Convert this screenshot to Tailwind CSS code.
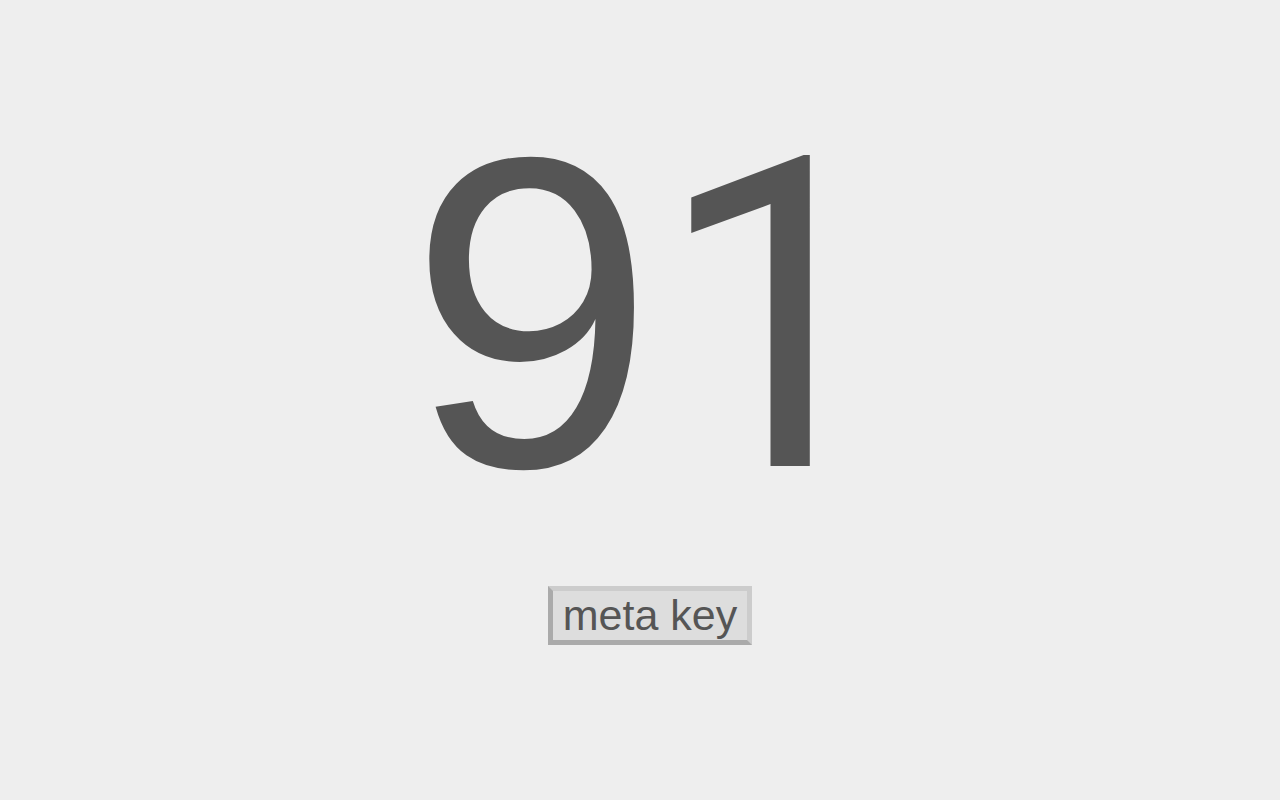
<!DOCTYPE html>
<html lang="en">
<head>
<meta charset="utf-8">
<meta name="viewport" content="width=device-width, initial-scale=1">
<title>Key code</title>
<script src="https://cdn.jsdelivr.net/npm/@tailwindcss/browser@4"></script>
</head>
<body class="min-h-screen bg-[#eee] pl-5 pt-17 font-['Liberation_Sans',Arial,sans-serif] text-[#555]">
<main class="flex flex-col items-center">
<h1 class="pl-2 text-[443px] leading-[490px]">9<span class="font-[Roboto,sans-serif] text-[435px] leading-none">1</span></h1>
<button type="button" class="mt-7 border-5 border-t-[#ccc] border-r-[#ccc] border-b-[#aaa] border-l-[#aaa] bg-[#ddd] px-2.5 text-[43px] leading-[49px]">meta key</button>
</main>
</body>
</html>
